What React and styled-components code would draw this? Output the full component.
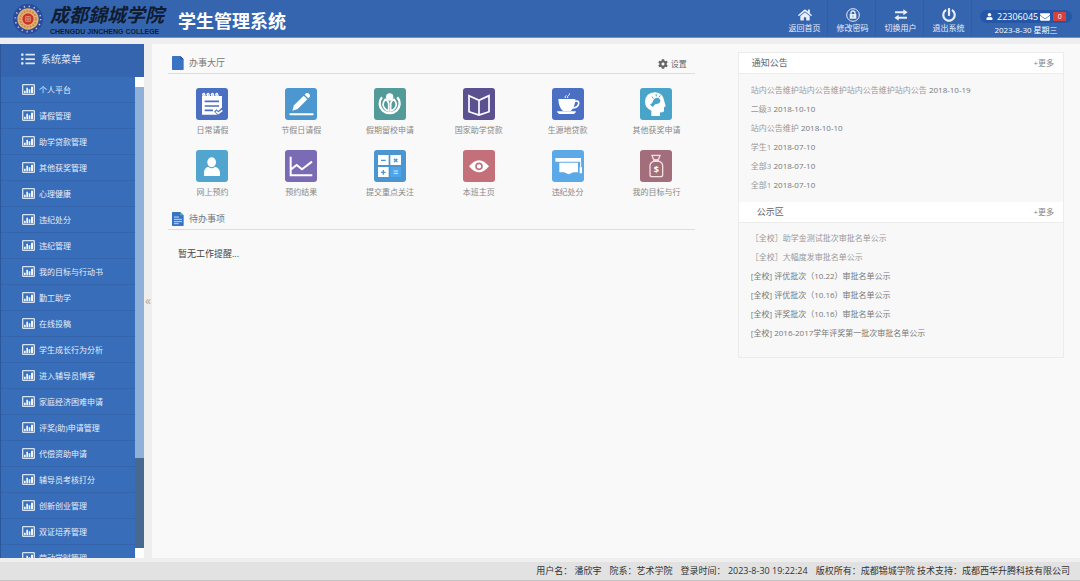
import React from 'react'
import styled, { createGlobalStyle } from 'styled-components'
import { FaCog, FaEnvelope, FaHome, FaListUl, FaPowerOff, FaUser } from 'react-icons/fa'

const GlobalStyle = createGlobalStyle`
*{
  box-sizing: border-box;
  margin: 0;
  padding: 0;
}
body{
  font-family: "Open Sans", "Noto Sans CJK SC", sans-serif;
  font-size: 8px;
  line-height: 12px;
  color: #888;
  background: #eeeeee;
}
button{
  font: inherit;
  color: inherit;
  background: none;
  border: none;
  cursor: pointer;
}
a{
  color: inherit;
  text-decoration: none;
}
ul{
  list-style: none;
}
svg{
  display: block;
  flex-shrink: 0;
}
`

const Page = styled.div`
  height: 100vh;
  display: flex;
  flex-direction: column;
`

// Top bar
const Header = styled.header`
  height: 38px;
  flex-shrink: 0;
  display: flex;
  align-items: stretch;
  background: #3565af;
  color: #fff;
  border-bottom: 1px solid #6f91c6;
`
const Brand = styled.div`
  display: flex;
  align-items: center;
  padding-left: 13px;
  gap: 7px;
  margin-right: auto;
`
const College = styled.div`
  color: #101c30;
  white-space: nowrap;
`
const CollegeName = styled.p`
  font-size: 19px;
  line-height: 26px;
  font-weight: 700;
  font-style: italic;
`
const CollegeEnglish = styled.p`
  font-family: "Liberation Sans", sans-serif;
  font-size: 7px;
  line-height: 8px;
  font-weight: 700;
`
const SystemName = styled.h1`
  font-size: 18px;
  line-height: 24px;
  font-weight: 700;
  padding: 4px 0 0 7px;
`
const Nav = styled.nav`
  display: flex;
`
const NavButton = styled.button`
  width: 48px;
  display: flex;
  flex-direction: column;
  align-items: center;
  justify-content: center;
  padding: 5px 0 0 2px;
  border-right: 1px solid #315fa6;
  color: #e8eefa;
`
const Account = styled.div`
  width: 108px;
  display: flex;
  flex-direction: column;
  align-items: center;
  padding-top: 10px;
`
const Pill = styled.div`
  width: 92px;
  height: 13px;
  display: flex;
  align-items: center;
  gap: 2px;
  padding-left: 6px;
  border-radius: 7px;
  background: #2657a6;
  font-size: 9px;
`
const UserId = styled.span`
  padding-left: 2px;
`
const Badge = styled.span`
  width: 13px;
  margin-left: 1px;
  border-radius: 1px;
  background: #d8403c;
  font-size: 7px;
  line-height: 9px;
  text-align: center;
`
const Today = styled.p`
  line-height: 14px;
`

// Middle
const Body = styled.div`
  flex: 1;
  min-height: 0;
  display: flex;
  padding: 6px 0 4px;
`
const Sidebar = styled.aside`
  width: 144px;
  flex-shrink: 0;
  display: flex;
  flex-direction: column;
  border-left: 1px solid #2c579b;
  background: #3565af;
`
const SidebarTitle = styled.h2`
  height: 33px;
  flex-shrink: 0;
  display: flex;
  align-items: center;
  gap: 6px;
  padding: 0 0 4px 20px;
  font-size: 10px;
  font-weight: 400;
  color: #dce6f5;
`
const MenuWrap = styled.div`
  flex: 1;
  min-height: 0;
  display: flex;
`
const Menu = styled.ul`
  flex: 1;
  overflow: hidden;
  background: #386db9;
`
const MenuLink = styled.a`
  height: 26px;
  display: flex;
  align-items: center;
  gap: 4px;
  padding-left: 21px;
  border-bottom: 1px solid #3464ac;
  color: #e6eefa;
`
const Scrollbar = styled.div`
  width: 9px;
  display: flex;
  flex-direction: column;
  background: #466891;
`
const ScrollCap = styled.span`
  height: 10px;
  background: #fff;
`
const ScrollThumb = styled.span`
  flex: 33;
  background: #8fb0d9;
`
const ScrollRest = styled.span`
  flex: 8;
`
const Collapse = styled.button`
  width: 8px;
  flex-shrink: 0;
  font-size: 12px;
  color: #aaa;
`
const Main = styled.main`
  flex: 1;
  display: grid;
  grid-template-columns: 21fr 13fr;
  gap: 43px;
  align-items: start;
  padding: 8px 16px 0;
  background: #f9f9f9;
`
const SectionHead = styled.div`
  height: 22px;
  display: flex;
  align-items: flex-end;
  padding: 0 8px 3px 4px;
  border-bottom: 1px solid #dedede;
`
const SectionTitle = styled.h2`
  display: flex;
  align-items: center;
  gap: 5px;
  margin-right: auto;
  font-size: 9px;
  line-height: 14px;
  font-weight: 400;
  color: #777;
`
const Settings = styled.button`
  display: flex;
  align-items: center;
  gap: 3px;
  color: #666;
`
const Apps = styled.ul`
  display: grid;
  grid-template-columns: repeat(6, 1fr);
  row-gap: 14px;
  margin-right: -6px;
  padding: 14px 0 10px;
`
const AppLink = styled.a`
  display: flex;
  flex-direction: column;
  align-items: center;
  gap: 4px;
  white-space: nowrap;
`
const Tile = styled.svg`
  width: 32px;
  height: 32px;
  border-radius: 3px;
  background: ${props => props.$color};
`
const Empty = styled.p`
  padding: 18px 10px;
  font-size: 9px;
  color: #444;
`
const Panels = styled.div`
  border: 1px solid #ececec;
  background: #f8f8f8;
`
const PanelHead = styled.div`
  height: 21px;
  display: flex;
  align-items: center;
  justify-content: space-between;
  padding: 0 9px 0 ${props => props.$indent ? '18px' : '13px'};
  background: #fff;
  border-bottom: 1px solid #ececec;
`
const PanelTitle = styled.h2`
  font-size: 9px;
  font-weight: 400;
  color: #666;
`
const News = styled.ul`
  padding: ${props => props.$last ? '5px 12px 15px' : '6px 12px 8px'};
  line-height: 19px;
`
const NewsLink = styled.a`
  color: ${props => props.$light ? '#999' : '#777'};
`
const Stamp = styled.time`
  color: #777;
`

// Bottom bar
const Footer = styled.footer`
  height: 19px;
  flex-shrink: 0;
  display: flex;
  align-items: center;
  justify-content: flex-end;
  gap: 8px;
  padding-right: 10px;
  border-bottom: 1px solid #c4c4c4;
  background: #e2e2e2;
  font-size: 9px;
  color: #333;
  white-space: nowrap;
`

const Seal = () => (
  <svg width="30" height="30" viewBox="0 0 90 90" aria-hidden="true">
    <circle cx="45" cy="45" r="45" fill="#2a4a9c" />
    <circle cx="45" cy="45" r="38" fill="none" stroke="#b9c3dc" strokeWidth="5" strokeDasharray="4 11" />
    <circle cx="45" cy="45" r="32" fill="#dfb072" />
    <circle cx="45" cy="45" r="24" fill="none" stroke="#c98247" strokeWidth="5" strokeDasharray="5 4" />
    <circle cx="45" cy="45" r="17" fill="#cb3429" />
    <path d="M38 38h14v14H38zM45 37v16M38 45h14" fill="none" stroke="#edb08c" strokeWidth="2" />
  </svg>
)

const LockIcon = () => (
  <svg width="14" height="14" viewBox="0 0 42 42" aria-hidden="true">
    <circle cx="21" cy="21" r="19" fill="none" stroke="currentColor" strokeWidth="3" />
    <path d="M15 20v-5a6 6 0 0 1 12 0v5" fill="none" stroke="currentColor" strokeWidth="4" />
    <path fillRule="evenodd" d="M11 18h20v14H11zM20 22v6h2v-6z" fill="currentColor" />
  </svg>
)

const SwapIcon = () => (
  <svg width="14" height="14" viewBox="0 0 42 42" aria-hidden="true">
    <path d="M3 10h25V4l13 9-13 9v-6H3zM39 26H14v-6L1 29l13 9v-6h25z" fill="currentColor" />
  </svg>
)

const ChartIcon = () => (
  <svg width="13" height="11" viewBox="0 0 39 33" aria-hidden="true">
    <rect x="2" y="2" width="35" height="29" rx="2" fill="#3b70b8" stroke="#d5e2f4" strokeWidth="4" />
    <path d="M6 20h5v8H6zM13 11h5v17h-5zM20 16h5v12h-5zM27 8h6v20h-6z" fill="#f2f6fc" />
  </svg>
)

const FileIcon = ({ lines }) => (
  <svg width="12" height="14" viewBox="0 0 36 42" aria-hidden="true">
    <path d="M2 0h23l10 10v30a2 2 0 0 1-2 2H2a2 2 0 0 1-2-2V2a2 2 0 0 1 2-2z" fill="#3a72c4" />
    <path d="M25 0l10 10H25z" fill={lines ? '#63b5a6' : '#24539c'} />
    {lines && <path d="M6 15h15M6 22h24M6 29h24M6 35h14" stroke="#c5d8f2" strokeWidth="3" />}
  </svg>
)

// Glyphs of the app tiles, all on a 96 x 96 canvas
const glyphs = {
  note: c => <>
    <path d="M18 24h60v44L66 80H18z" fill="#fff" />
    <path d="M24 28l-4-9q4-5 6 0l2 9M37 28l-4-9q4-5 6 0l2 9M50 28l-4-9q4-5 6 0l2 9M63 28l-4-9q4-5 6 0l2 9" fill="none" stroke="#fff" strokeWidth="4" />
    <path d="M26 40h43M26 54h43M26 67h25" stroke={c} strokeWidth="5" />
    <path d="M58 67l9 9 16-15" fill="none" stroke={c} strokeWidth="10" />
    <path d="M60 70l7 6 12-9" fill="none" stroke="#fff" strokeWidth="5" />
  </>,
  pencil: () => <>
    <path d="M22 68l5-16 29-29 11 11-29 29z" fill="#fff" />
    <path d="M59 20l4-4q5-3 10 2 4 4 1 9l-4 4z" fill="#fff" />
    <path d="M16 79h67" stroke="#fff" strokeWidth="6" strokeLinecap="round" />
  </>,
  sprout: () => <>
    <circle cx="47" cy="27" r="11" fill="#fff" />
    <path d="M24 28a30 29 0 1 0 46 0" fill="none" stroke="#fff" strokeWidth="7" />
    <path d="M34 34q-12 14-3 26 6 8 13 9V47q-1-8-10-13zM60 34q12 14 3 26-6 8-13 9V47q1-8 10-13z" fill="none" stroke="#fff" strokeWidth="5" />
  </>,
  book: () => (
    <path d="M18 23l30 14 30-14v48l-30 10-30-10zM48 37v43" fill="none" stroke="#fff" strokeWidth="5" />
  ),
  cup: () => <>
    <path d="M19 33h51q-1 26-14 36H33Q20 59 19 33z" fill="#fff" />
    <path d="M68 40q13-4 12 7-2 11-17 13" fill="none" stroke="#fff" strokeWidth="5" />
    <path d="M15 70h57q-2 8-7 8H22q-5 0-7-8z" fill="#fff" />
    <path d="M40 30q-2-5 3-8M47 30q-2-5 3-8 4-3 2-6" fill="none" stroke="#fff" strokeWidth="3" />
  </>,
  mind: c => <>
    <path d="M34 84V68Q15 59 15 41 17 14 45 13q25 1 28 27l4 15-5 3v12q-2 4-12 3v11z" fill="#fff" />
    <path d="M30 50q8-3 10-13 3-9 12-8 10 2 9 11-3 9-14 8-6 4-8 9z" fill={c} />
    <path d="M36 26l4 6M48 18l1 7M61 22l-4 6" stroke={c} strokeWidth="3" />
  </>,
  person: () => <>
    <ellipse cx="47" cy="37" rx="13" ry="15" fill="#fff" />
    <path d="M24 78V66q1-12 13-16 10 10 20 0 13 4 15 16v12z" fill="#fff" />
  </>,
  line: () => (
    <path d="M17 20v56h65M18 58l17-13 16 13 30-23" fill="none" stroke="#fff" strokeWidth="6" />
  ),
  calc: c => <>
    <path d="M12 15h32v30H12zM49 15h32v30H49zM12 51h32v30H12z" fill="#fff" />
    <path d="M49 51h32v30H49z" fill="#4da5ec" />
    <path d="M21 31h14M60 26l10 10M70 26L60 36M21 67h14M28 60v14" stroke={c} strokeWidth="4" />
    <path d="M59 63h13M59 70h13" stroke="#d8ecfb" strokeWidth="3" />
  </>,
  eye: c => <>
    <path d="M18 49q30-36 60 0-30 36-60 0z" fill="#fff" />
    <circle cx="48" cy="49" r="9" fill="none" stroke={c} strokeWidth="5" />
  </>,
  cap: () => <>
    <path d="M10 24h77v11H10zM22 38h56v29H64l-14 6-14-6H22z" fill="#fff" />
    <path d="M86 34v19" stroke="#fff" strokeWidth="3" />
    <path d="M83 52h7v18h-7z" fill="#fff" />
  </>,
  fund: () => <>
    <path d="M36 16h24l-4 11q-8 5-16 0zM39 32h18M40 34q-10 4-10 14v26q0 6 6 6h26q6 0 6-6V48q0-10-10-14z" fill="none" stroke="#f4dfe3" strokeWidth="4" />
    <text x="49" y="68" fill="#fff" fontSize="27" fontWeight="700" textAnchor="middle">$</text>
  </>,
}

const apps = [
  { name: '日常请假', glyph: 'note', color: '#4b6fc2' },
  { name: '节假日请假', glyph: 'pencil', color: '#4c97d0' },
  { name: '假期留校申请', glyph: 'sprout', color: '#529b98' },
  { name: '国家助学贷款', glyph: 'book', color: '#5b5191' },
  { name: '生源地贷款', glyph: 'cup', color: '#4b70c3' },
  { name: '其他获奖申请', glyph: 'mind', color: '#48a5c9' },
  { name: '网上预约', glyph: 'person', color: '#52a5cf' },
  { name: '预约结果', glyph: 'line', color: '#7b6bb5' },
  { name: '提交重点关注', glyph: 'calc', color: '#4b95d0' },
  { name: '本班主页', glyph: 'eye', color: '#c3707b' },
  { name: '违纪处分', glyph: 'cap', color: '#5ba9e7' },
  { name: '我的目标与行', glyph: 'fund', color: '#a36e7c' },
]

const menu = [
  '个人平台', '请假管理', '助学贷款管理', '其他获奖管理', '心理健康', '违纪处分', '违纪管理',
  '我的目标与行动书', '勤工助学', '在线投稿', '学生成长行为分析', '进入辅导员博客', '家庭经济困难申请',
  '评奖(助)申请管理', '代偿资助申请', '辅导员考核打分', '创新创业管理', '双证培养管理', '劳动学时管理',
]

const notices = [
  ['站内公告维护站内公告维护站内公告维护站内公告', '2018-10-19'],
  ['二级3', '2018-10-10'],
  ['站内公告维护', '2018-10-10'],
  ['学生1', '2018-07-10'],
  ['全部3', '2018-07-10'],
  ['全部1', '2018-07-10'],
]

const publicity = [
  { text: '［全校］助学金测试批次审批名单公示', light: true },
  { text: '［全校］大幅度发审批名单公示', light: true },
  { text: '[全校] 评优批次（10.22）审批名单公示' },
  { text: '[全校] 评优批次（10.16）审批名单公示' },
  { text: '[全校] 评奖批次（10.16）审批名单公示' },
  { text: '[全校] 2016-2017学年评奖第一批次审批名单公示' },
]

const App = () => {
  return (
    <>
      <GlobalStyle />
      <Page>
        <Header>
          <Brand>
            <Seal />
            <College>
              <CollegeName>成都錦城学院</CollegeName>
              <CollegeEnglish>CHENGDU JINCHENG COLLEGE</CollegeEnglish>
            </College>
            <SystemName>学生管理系统</SystemName>
          </Brand>
          <Nav>
            <NavButton><FaHome size={14} />返回首页</NavButton>
            <NavButton><LockIcon />修改密码</NavButton>
            <NavButton><SwapIcon />切换用户</NavButton>
            <NavButton><FaPowerOff size={14} />退出系统</NavButton>
          </Nav>
          <Account>
            <Pill>
              <FaUser size={7} />
              <UserId>22306045</UserId>
              <FaEnvelope size={10} />
              <Badge>0</Badge>
            </Pill>
            <Today>2023-8-30 星期三</Today>
          </Account>
        </Header>

        <Body>
          <Sidebar>
            <SidebarTitle><FaListUl size={14} />系统菜单</SidebarTitle>
            <MenuWrap>
              <Menu>
                {menu.map(name => (
                  <li key={name}>
                    <MenuLink href="#"><ChartIcon />{name}</MenuLink>
                  </li>
                ))}
              </Menu>
              <Scrollbar aria-hidden="true">
                <ScrollCap />
                <ScrollThumb />
                <ScrollRest />
                <ScrollCap />
              </Scrollbar>
            </MenuWrap>
          </Sidebar>
          <Collapse aria-label="收起菜单">«</Collapse>

          <Main>
            <div>
              <SectionHead>
                <SectionTitle><FileIcon />办事大厅</SectionTitle>
                <Settings><FaCog size={10} />设置</Settings>
              </SectionHead>
              <Apps>
                {apps.map(({ name, glyph, color }) => (
                  <li key={name}>
                    <AppLink href="#">
                      <Tile viewBox="0 0 96 96" $color={color} aria-hidden="true">
                        {glyphs[glyph](color)}
                      </Tile>
                      {name}
                    </AppLink>
                  </li>
                ))}
              </Apps>
              <SectionHead>
                <SectionTitle><FileIcon lines />待办事项</SectionTitle>
              </SectionHead>
              <Empty>暂无工作提醒...</Empty>
            </div>

            <Panels>
              <PanelHead>
                <PanelTitle>通知公告</PanelTitle>
                <a href="#">+更多</a>
              </PanelHead>
              <News>
                {notices.map(([text, date]) => (
                  <li key={text}>
                    <NewsLink href="#" $light>{text} <Stamp>{date}</Stamp></NewsLink>
                  </li>
                ))}
              </News>
              <PanelHead $indent>
                <PanelTitle>公示区</PanelTitle>
                <a href="#">+更多</a>
              </PanelHead>
              <News $last>
                {publicity.map(({ text, light }) => (
                  <li key={text}>
                    <NewsLink href="#" $light={light}>{text}</NewsLink>
                  </li>
                ))}
              </News>
            </Panels>
          </Main>
        </Body>

        <Footer>
          <span>用户名： 潘欣宇</span>
          <span>院系：艺术学院</span>
          <span>登录时间： 2023-8-30 19:22:24</span>
          <span>版权所有：成都锦城学院 技术支持：成都西华升腾科技有限公司</span>
        </Footer>
      </Page>
    </>
  )
}

export default App
